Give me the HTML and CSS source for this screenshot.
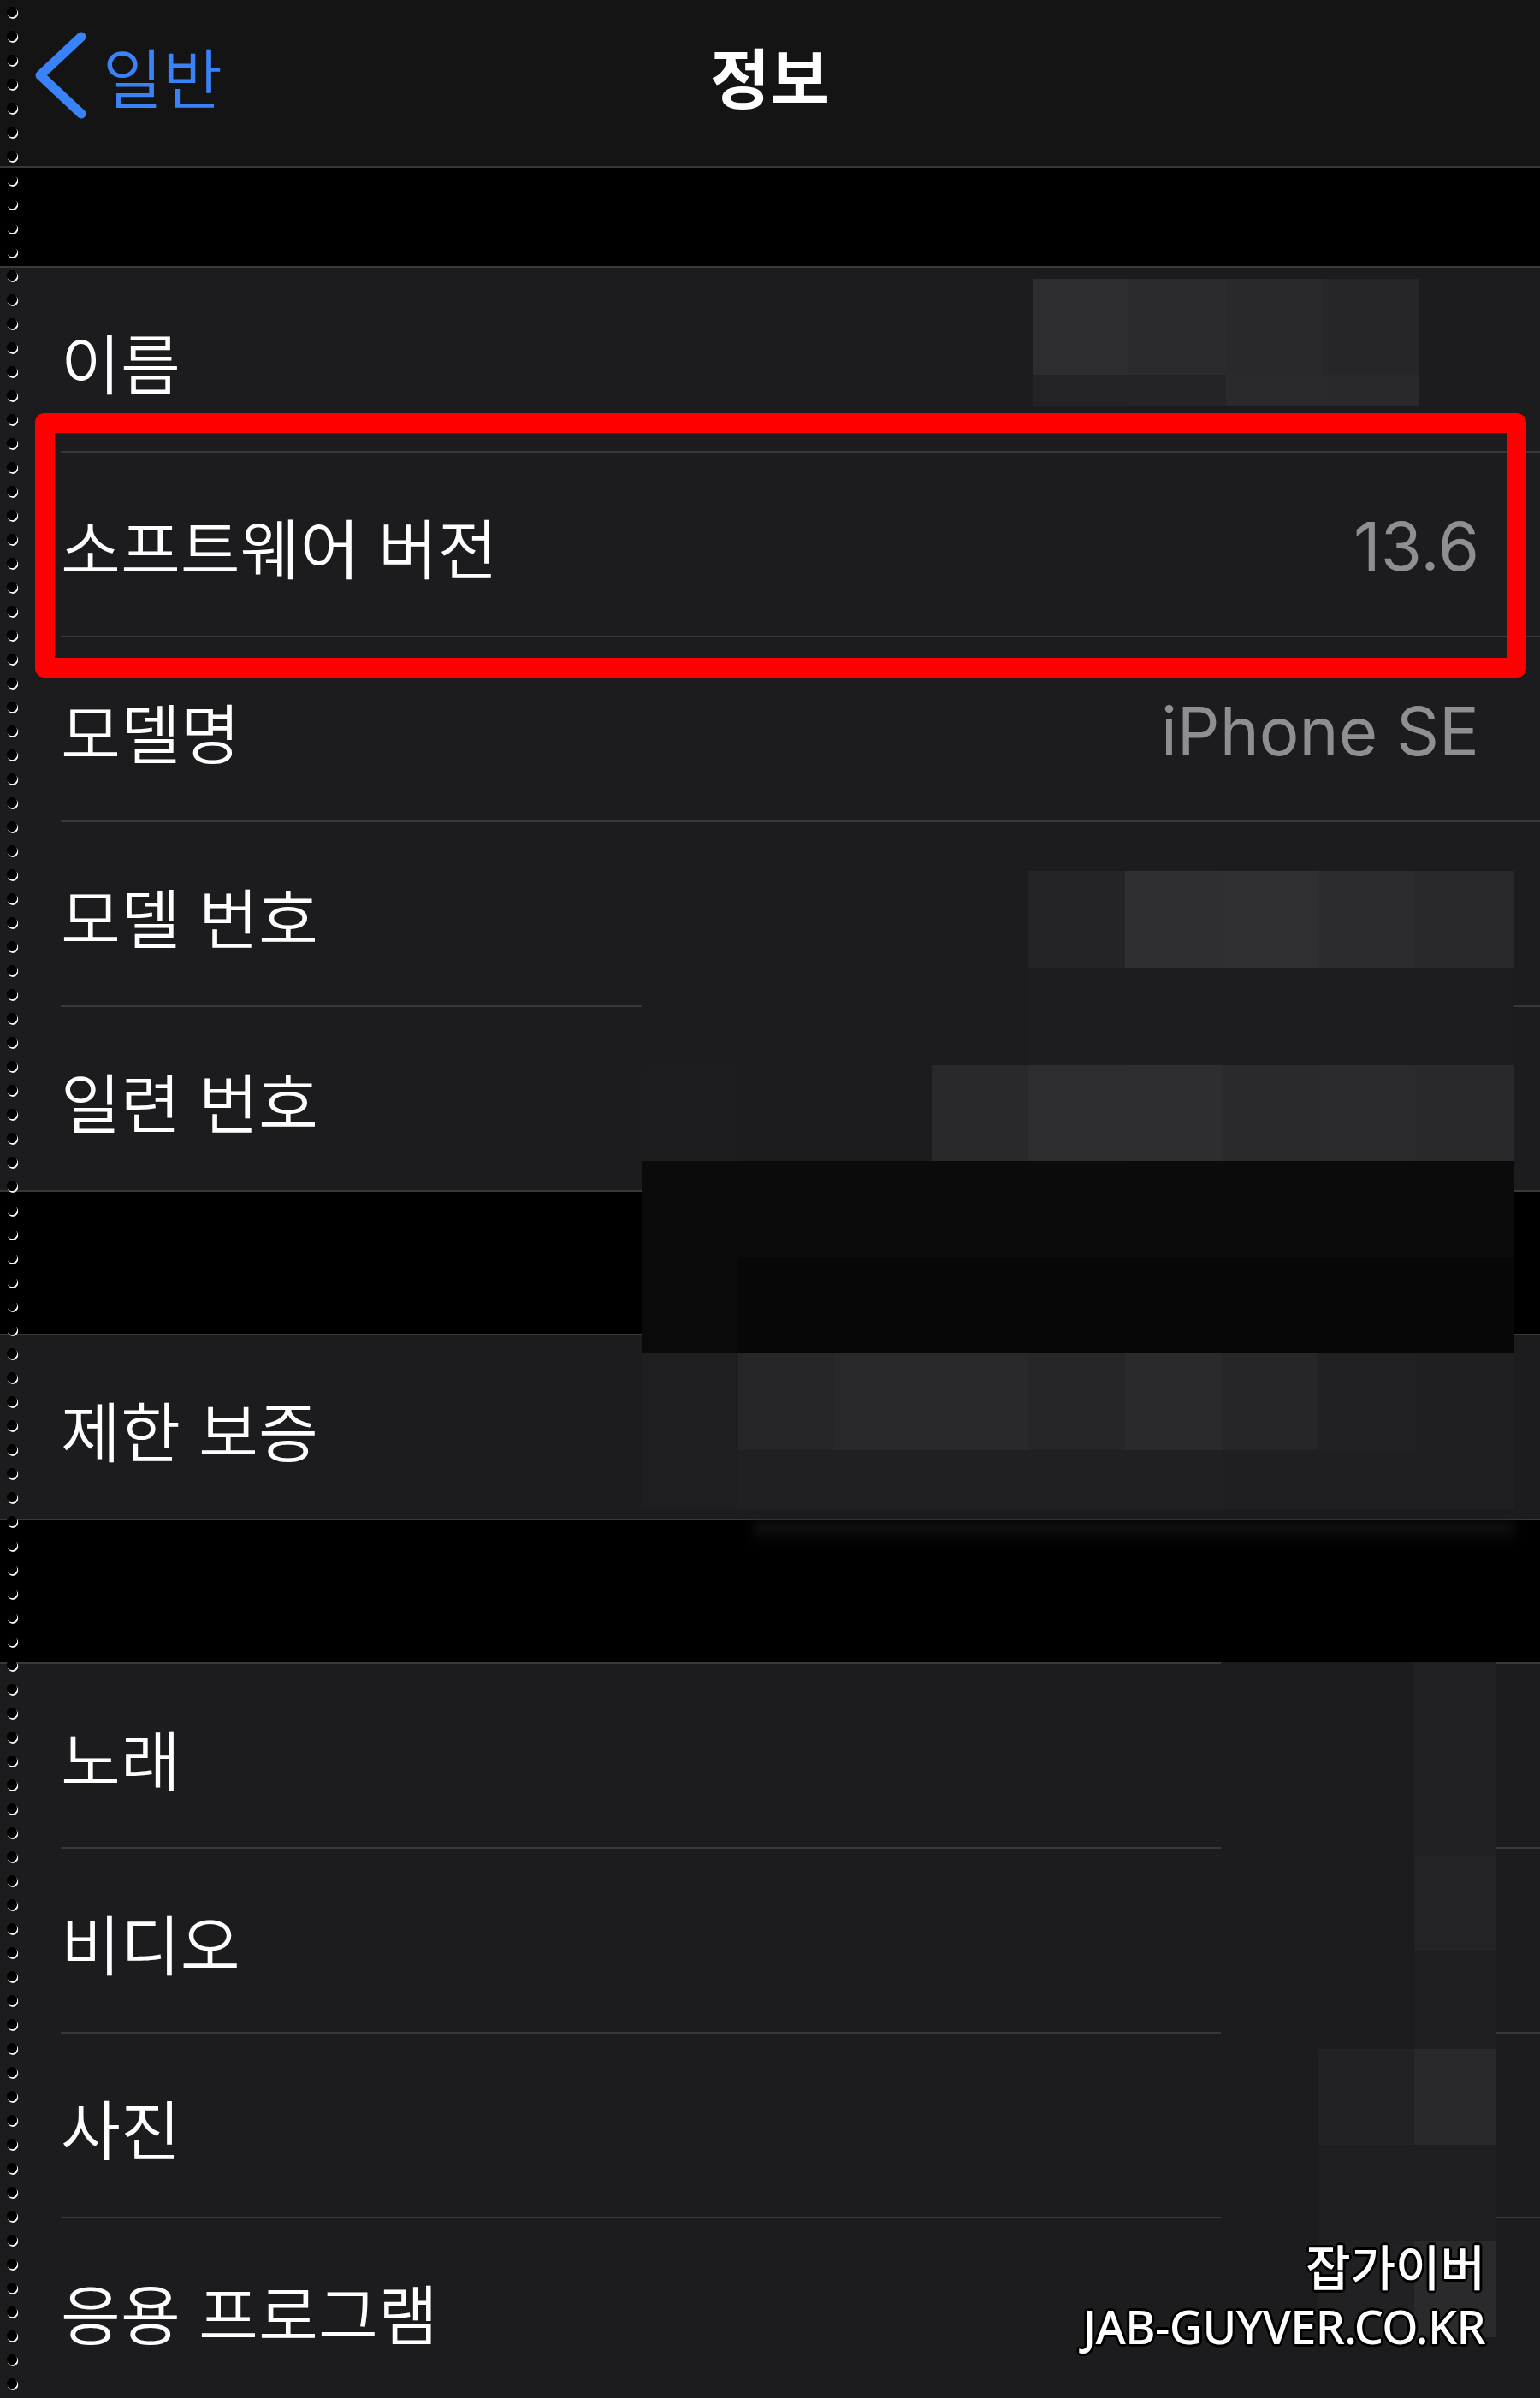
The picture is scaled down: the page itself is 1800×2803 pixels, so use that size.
FILE: index.html
```html
<!DOCTYPE html>
<html lang="ko">
<head>
<meta charset="utf-8">
<title>정보</title>
<link rel="stylesheet" href="styles.css">
</head>
<body>
<div class="page">
  <div class="binding"></div>

  <header class="nav">
    <a class="back">
      <svg class="chevron" width="70" height="110" viewBox="0 0 70 110"><polyline points="59,10 11,55 59,100" fill="none" stroke="#3a82f7" stroke-width="11" stroke-linecap="round" stroke-linejoin="round"/></svg>
      <span class="back-label">일반</span>
    </a>
    <h1 class="title">정보</h1>
    <div class="nav-spacer"></div>
  </header>

  <div class="gap gap-top"></div>

  <section class="group">
    <div class="row"><span class="label">이름</span></div>
    <div class="row row-marked"><span class="label">소프트웨어 버전</span><span class="value">13.6</span><div class="highlight"></div></div>
    <div class="row"><span class="label">모델명</span><span class="value">iPhone SE</span></div>
    <div class="row"><span class="label">모델 번호</span></div>
    <div class="row"><span class="label">일련 번호</span></div>
  </section>

  <div class="gap"></div>

  <section class="group">
    <div class="row"><span class="label">제한 보증</span></div>
  </section>

  <div class="gap"></div>

  <section class="group">
    <div class="row"><span class="label">노래</span></div>
    <div class="row"><span class="label">비디오</span></div>
    <div class="row"><span class="label">사진</span></div>
    <div class="row"><span class="label">응용 프로그램</span></div>
  </section>

  <div class="mosaic mosaic-name">
    <i class="s2d"></i><i class="s2b"></i><i class="s29"></i><i class="s26"></i>
    <i class="s23"></i><i class="s24"></i><i class="s2a"></i><i class="s29"></i>
  </div>

  <div class="mosaic mosaic-serial">
    <i class="bg"></i><i class="bg"></i><i class="bg"></i><i class="bg"></i><i class="s24"></i><i class="s2f"></i><i class="s30"></i><i class="s2c"></i><i class="s28"></i>
    <i class="bg"></i><i class="bg"></i><i class="bg"></i><i class="bg"></i><i class="s1d"></i><i class="s1d"></i><i class="s1d"></i><i class="s1d"></i><i class="s1d"></i>
    <i class="s1d"></i><i class="bg"></i><i class="bg"></i><i class="s29"></i><i class="s2d"></i><i class="s2e"></i><i class="s2a"></i><i class="s2b"></i><i class="s29"></i>
    <i class="k0b"></i><i class="k0b"></i><i class="k0b"></i><i class="k0b"></i><i class="k0b"></i><i class="k0b"></i><i class="k0b"></i><i class="k0b"></i><i class="k0b"></i>
    <i class="k0a"></i><i class="k07"></i><i class="k07"></i><i class="k07"></i><i class="k07"></i><i class="k07"></i><i class="k07"></i><i class="k07"></i><i class="k07"></i>
    <i class="s1e"></i><i class="s26"></i><i class="s29"></i><i class="s29"></i><i class="s26"></i><i class="s2a"></i><i class="s26"></i><i class="s21"></i><i class="s1f"></i>
    <i class="s1e"></i><i class="s20"></i><i class="s20"></i><i class="s20"></i><i class="s20"></i><i class="s20"></i><i class="s1f"></i><i class="s1f"></i><i class="s1f"></i>
  </div>
  <div class="mosaic-glow"></div>

  <div class="mosaic mosaic-media">
    <i class="bg"></i><i class="bg"></i><i class="s21"></i>
    <i class="bg"></i><i class="bg"></i><i class="s21"></i>
    <i class="bg"></i><i class="bg"></i><i class="s23"></i>
    <i class="bg"></i><i class="bg"></i><i class="s1e"></i>
    <i class="bg"></i><i class="s22"></i><i class="s29"></i>
    <i class="bg"></i><i class="s1e"></i><i class="s1e"></i>
    <i class="bg"></i><i class="s21"></i><i class="s2a"></i>
  </div>

  <div class="watermark">
    <div class="wm-ko">잡가이버</div>
    <div class="wm-en">JAB-GUYVER.CO.KR</div>
  </div>
</div>
</body>
</html>
```

FILE: styles.css
```css
html, body {
  margin: 0;
  padding: 0;
  background: #000;
}

.page {
  position: relative;
  width: 1800px;
  height: 2803px;
  overflow: hidden;
  background: #000;
  font-family: "Noto Sans CJK KR", "Noto Sans", sans-serif;
  color: #fff;
}

/* binder holes along the left edge */
.binding {
  position: absolute;
  left: 0;
  top: 0;
  width: 28px;
  height: 100%;
  z-index: 20;
  background-image:
    radial-gradient(circle at 14px 14px, #000 5.6px, rgba(0,0,0,0) 6.4px),
    radial-gradient(circle at 15px 15.6px, #f4f4f4 5.8px, rgba(255,255,255,0) 6.6px);
  background-size: 28px 28px, 28px 28px;
  background-repeat: repeat-y, repeat-y;
}

/* navigation bar */
.nav {
  height: 196px;
  box-sizing: border-box;
  padding: 0 0 18px 36px;
  background: #141414;
  border-bottom: 2px solid #38383a;
  display: grid;
  grid-template-columns: 1fr auto 1fr;
  align-items: center;
}
.back {
  display: flex;
  align-items: center;
  gap: 14px;
  color: #3a82f7;
  text-decoration: none;
}
.chevron {
  display: block;
  flex: none;
}
.back-label {
  font-size: 76px;
  font-weight: 350;
  line-height: 1;
  color: #3a82f7;
}
.title {
  margin: 0;
  font-size: 76px;
  font-weight: 700;
  line-height: 1;
  color: #fff;
  transform: translateX(-18px);
}

/* grouped list */
.gap {
  height: 166px;
  background: #000;
}
.gap-top {
  height: 115px;
}
.group {
  background: #1c1c1e;
  border-top: 2px solid #38383a;
  border-bottom: 2px solid #38383a;
}
.row {
  position: relative;
  height: 214px;
  margin-left: 71px;
  padding-right: 71px;
  display: flex;
  align-items: center;
  justify-content: space-between;
  border-bottom: 2px solid #38383a;
}
.row:last-child {
  border-bottom: none;
}
.label {
  font-size: 76px;
  font-weight: 350;
  line-height: 1;
  color: #fff;
  white-space: nowrap;
  margin-top: 4px;
}
.value {
  font-family: "Inter", "Liberation Sans", sans-serif;
  font-size: 78px;
  line-height: 1;
  color: #8e8e93;
  margin-top: 6px;
}

/* red annotation box */
.highlight {
  position: absolute;
  left: -30px;
  right: 16px;
  top: -46px;
  bottom: -49px;
  border: 23px solid #ff0000;
  border-radius: 11px;
  z-index: 12;
  pointer-events: none;
}

/* pixelated privacy blocks */
.mosaic {
  position: absolute;
  display: grid;
  z-index: 5;
}
.mosaic i {
  display: block;
}
.mosaic-name {
  left: 1207px;
  top: 326px;
  grid-template-columns: repeat(4, 113px);
  grid-template-rows: 112px 36px;
}
.mosaic-serial {
  left: 750px;
  top: 1018px;
  grid-template-columns: repeat(8, 113px) 116px;
  grid-template-rows: 113px 114px 112px 112px 113px 113px 69px;
}
.mosaic-glow {
  position: absolute;
  left: 880px;
  top: 1779px;
  width: 890px;
  height: 26px;
  z-index: 4;
  background: linear-gradient(to bottom, rgba(28,28,30,0.75), rgba(0,0,0,0));
  filter: blur(6px);
}
.mosaic-media {
  left: 1427px;
  top: 1943px;
  grid-template-columns: 113px 113px 95px;
  grid-template-rows: 114px 111px 112px 115px 112px 113px 112px;
}

.bg  { background: #1c1c1e; }
.s1d { background: #1d1d1f; }
.s1e { background: #1e1e20; }
.s1f { background: #1f1f21; }
.s20 { background: #202022; }
.s21 { background: #212123; }
.s22 { background: #222224; }
.s23 { background: #232325; }
.s24 { background: #242426; }
.s26 { background: #262628; }
.s28 { background: #28282a; }
.s29 { background: #29292b; }
.s2a { background: #2a2a2c; }
.s2b { background: #2b2b2d; }
.s2c { background: #2c2c2e; }
.s2d { background: #2d2d2f; }
.s2e { background: #2e2e30; }
.s2f { background: #2f2f31; }
.s30 { background: #303032; }
.k0a { background: #0a0a0a; }
.k0b { background: #0b0b0b; }
.k07 { background: #070707; }

/* watermark */
.watermark {
  position: absolute;
  right: 64px;
  top: 2610px;
  z-index: 15;
  text-align: right;
  font-family: "Noto Sans CJK KR", "Noto Sans", sans-serif;
  font-weight: 500;
  color: #fff;
  text-shadow:
    3px 0 0 #000, -3px 0 0 #000, 0 3px 0 #000, 0 -3px 0 #000,
    2px 2px 0 #000, -2px -2px 0 #000, 2px -2px 0 #000, -2px 2px 0 #000;
}
.wm-ko {
  font-size: 57px;
  line-height: 74px;
}
.wm-en {
  font-family: "Noto Sans", "Open Sans", sans-serif;
  font-size: 54px;
  font-weight: 500;
  line-height: 70px;
  letter-spacing: -0.6px;
}
```
